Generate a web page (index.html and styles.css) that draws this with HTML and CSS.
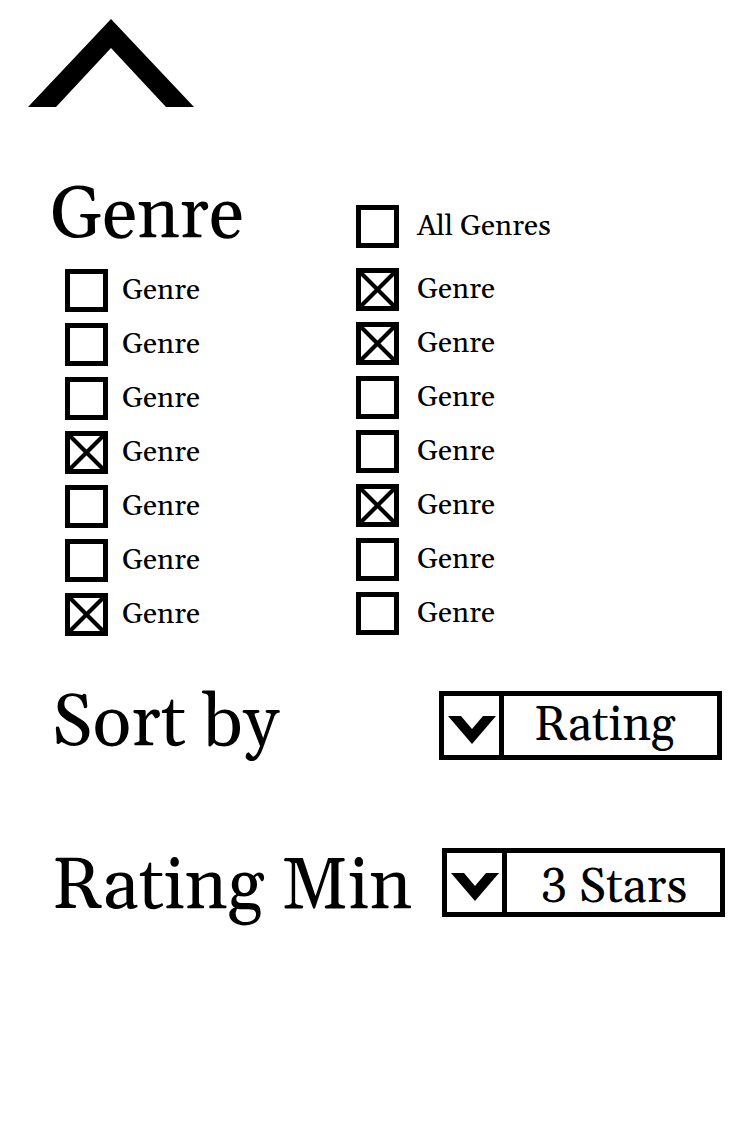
FILE: index.html
```html
<!DOCTYPE html>
<html lang="en">
<head>
<meta charset="utf-8">
<meta name="viewport" content="width=device-width, initial-scale=1">
<title>Filters</title>
<link rel="stylesheet" href="styles.css">
</head>
<body>
<form class="filters">
  <button class="collapse" type="button" aria-label="Close filters">
    <svg class="collapse-icon" viewBox="0 0 166 88" aria-hidden="true"><path d="M83 0L166 88H138L83 29L28 88H0Z"/></svg>
  </button>
  <section class="genres" aria-labelledby="genre-title">
    <div class="column first">
      <h2 class="title" id="genre-title">Genre</h2>
      <div class="options">
        <label class="option"><input class="box" type="checkbox">Genre</label>
        <label class="option"><input class="box" type="checkbox">Genre</label>
        <label class="option"><input class="box" type="checkbox">Genre</label>
        <label class="option"><input class="box" type="checkbox" checked>Genre</label>
        <label class="option"><input class="box" type="checkbox">Genre</label>
        <label class="option"><input class="box" type="checkbox">Genre</label>
        <label class="option"><input class="box" type="checkbox" checked>Genre</label>
      </div>
    </div>
    <div class="column second">
      <label class="option all"><input class="box" type="checkbox">All Genres</label>
      <div class="options">
        <label class="option"><input class="box" type="checkbox" checked>Genre</label>
        <label class="option"><input class="box" type="checkbox" checked>Genre</label>
        <label class="option"><input class="box" type="checkbox">Genre</label>
        <label class="option"><input class="box" type="checkbox">Genre</label>
        <label class="option"><input class="box" type="checkbox" checked>Genre</label>
        <label class="option"><input class="box" type="checkbox">Genre</label>
        <label class="option"><input class="box" type="checkbox">Genre</label>
      </div>
    </div>
  </section>
  <div class="row sort">
    <label class="title" for="sort">Sort by</label>
    <div class="picker">
      <span class="arrow"><svg class="arrow-icon" viewBox="0 0 48 28" aria-hidden="true"><path d="M0 0H13L24 13L35 0H48L24 28Z"/></svg></span>
      <select class="select" id="sort"><option>Rating</option></select>
    </div>
  </div>
  <div class="row minimum">
    <label class="title" for="minimum">Rating Min</label>
    <div class="picker">
      <span class="arrow"><svg class="arrow-icon" viewBox="0 0 48 28" aria-hidden="true"><path d="M0 0H13L24 13L35 0H48L24 28Z"/></svg></span>
      <select class="select" id="minimum"><option>3 Stars</option></select>
    </div>
  </div>
</form>
</body>
</html>
```
FILE: styles.css
```css
* { box-sizing: border-box; }
body {
  margin: 0;
  background: #fff;
  color: #000;
  font-family: Georgia, Gelasio, "DejaVu Serif", "Liberation Serif", serif;
}
.filters { padding: 19px 25px 40px 28px; }
.collapse { display: block; padding: 0; border: 0; background: none; }
.collapse-icon { display: block; width: 166px; height: 88px; }
.genres { display: grid; grid-template-columns: 328px 1fr; margin-top: 67px; }
.title { margin: 0; font-size: 72px; font-weight: 400; line-height: 84px; white-space: nowrap; }
.first .title { padding-left: 22px; }
.first .options { padding-left: 37px; margin-top: 11px; }
.options { display: grid; gap: 11px; }
.option { display: flex; align-items: center; gap: 14px; height: 43px; font-size: 29px; line-height: 40px; }
.second .option { gap: 18px; }
.second .all { margin-top: 31px; }
.second .options { margin-top: 20px; }
.box {
  flex: none;
  appearance: none;
  width: 43px;
  height: 43px;
  margin: 0;
  border: 5px solid #000;
  background: #fff;
}
.box:checked {
  background:
    linear-gradient(45deg, transparent 45%, #000 46%, #000 54%, transparent 55%),
    linear-gradient(135deg, transparent 45%, #000 46%, #000 54%, transparent 55%);
}
.row { display: flex; justify-content: space-between; align-items: flex-start; padding-left: 24px; }
.sort { margin: 46px 3px 0 0; }
.minimum { margin-top: 79px; }
.picker { display: flex; width: 283px; height: 69px; border: 5px solid #000; }
.sort .picker { margin-top: 9px; }
.minimum .picker { margin-top: 3px; }
.arrow { display: grid; place-items: center; width: 60px; padding-top: 8px; border-right: 5px solid #000; }
.arrow-icon { display: block; width: 48px; height: 28px; }
.select {
  flex: 1;
  min-width: 0;
  appearance: none;
  margin: 0;
  padding: 0 0 0 30px;
  border: 0;
  border-radius: 0;
  background: #fff;
  color: inherit;
  font: 48px/58px Georgia, Gelasio, "DejaVu Serif", "Liberation Serif", serif;
  font-variant-numeric: lining-nums;
}
.minimum .select { padding: 6px 0 0 34px; }
```
